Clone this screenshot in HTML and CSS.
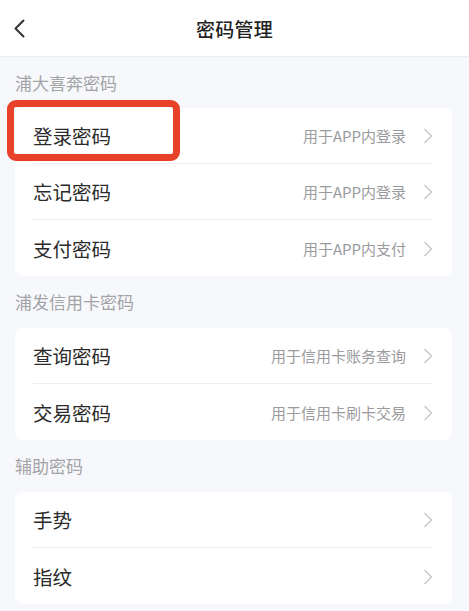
FILE: index.html
```html
<!DOCTYPE html>
<html lang="zh-CN">
<head>
<meta charset="utf-8">
<title>密码管理</title>
<link rel="stylesheet" href="styles.css">
</head>
<body>
  <header class="nav">
    <button class="nav-back" aria-label="返回">
      <svg width="12" height="19" viewBox="0 0 12 19"><path d="M10.5 1.5 L2.5 9.5 L10.5 17.5" fill="none" stroke="#333" stroke-width="2" stroke-linecap="round" stroke-linejoin="round"/></svg>
    </button>
    <h1 class="nav-title">密码管理</h1>
  </header>

  <main class="content">
    <section class="group">
      <h2 class="group-title">浦大喜奔密码</h2>
      <ul class="card">
        <li class="row">
          <span class="row-label">登录密码</span>
          <span class="row-hint">用于APP内登录</span>
          <svg class="chev" width="10" height="16" viewBox="0 0 10 16"><path d="M1.5 1 L8.5 8 L1.5 15" fill="none" stroke="#c6c6c8" stroke-width="1.4"/></svg>
          <span class="mark"></span>
        </li>
        <li class="row">
          <span class="row-label">忘记密码</span>
          <span class="row-hint">用于APP内登录</span>
          <svg class="chev" width="10" height="16" viewBox="0 0 10 16"><path d="M1.5 1 L8.5 8 L1.5 15" fill="none" stroke="#c6c6c8" stroke-width="1.4"/></svg>
        </li>
        <li class="row">
          <span class="row-label">支付密码</span>
          <span class="row-hint">用于APP内支付</span>
          <svg class="chev" width="10" height="16" viewBox="0 0 10 16"><path d="M1.5 1 L8.5 8 L1.5 15" fill="none" stroke="#c6c6c8" stroke-width="1.4"/></svg>
        </li>
      </ul>
    </section>

    <section class="group">
      <h2 class="group-title">浦发信用卡密码</h2>
      <ul class="card">
        <li class="row">
          <span class="row-label">查询密码</span>
          <span class="row-hint">用于信用卡账务查询</span>
          <svg class="chev" width="10" height="16" viewBox="0 0 10 16"><path d="M1.5 1 L8.5 8 L1.5 15" fill="none" stroke="#c6c6c8" stroke-width="1.4"/></svg>
        </li>
        <li class="row">
          <span class="row-label">交易密码</span>
          <span class="row-hint">用于信用卡刷卡交易</span>
          <svg class="chev" width="10" height="16" viewBox="0 0 10 16"><path d="M1.5 1 L8.5 8 L1.5 15" fill="none" stroke="#c6c6c8" stroke-width="1.4"/></svg>
        </li>
      </ul>
    </section>

    <section class="group">
      <h2 class="group-title">辅助密码</h2>
      <ul class="card">
        <li class="row">
          <span class="row-label">手势</span>
          <span class="row-hint"></span>
          <svg class="chev" width="10" height="16" viewBox="0 0 10 16"><path d="M1.5 1 L8.5 8 L1.5 15" fill="none" stroke="#c6c6c8" stroke-width="1.4"/></svg>
        </li>
        <li class="row">
          <span class="row-label">指纹</span>
          <span class="row-hint"></span>
          <svg class="chev" width="10" height="16" viewBox="0 0 10 16"><path d="M1.5 1 L8.5 8 L1.5 15" fill="none" stroke="#c6c6c8" stroke-width="1.4"/></svg>
        </li>
      </ul>
    </section>
  </main>
</body>
</html>
```

FILE: styles.css
```css
* {
  box-sizing: border-box;
}

html, body {
  margin: 0;
  padding: 0;
}

body {
  background: #f7f8fc;
  font-family: "Noto Sans CJK SC", "Noto Sans", sans-serif;
  color: #333;
  width: 469px;
  overflow: hidden;
}

/* top navigation bar */
.nav {
  position: relative;
  height: 57px;
  background: #fff;
  border-bottom: 1px solid #ededf0;
  display: flex;
  align-items: center;
  justify-content: center;
}

.nav-back {
  position: absolute;
  left: 13px;
  top: 19px;
  padding: 0;
  border: 0;
  background: none;
  display: flex;
}

.nav-title {
  margin: 0;
  font-size: 19px;
  font-weight: 500;
  color: #222;
  letter-spacing: 0.3px;
}

/* grouped lists */
.group-title {
  margin: 0;
  height: 52px;
  padding: 0 0 1px 15px;
  display: flex;
  align-items: center;
  font-size: 17px;
  font-weight: 400;
  color: #a3a3a6;
}

.group:first-child .group-title {
  height: 51px;
}

.card {
  list-style: none;
  margin: 0 17px 0 15px;
  padding: 0 19px 0 18px;
  background: #fff;
  border-radius: 8px;
}

.row {
  position: relative;
  height: 56px;
  display: flex;
  align-items: center;
  border-bottom: 1px solid #efeff1;
}

.row:last-child {
  border-bottom: 0;
}

.row-label {
  font-size: 19.5px;
  color: #2b2b2b;
  flex: 1;
}

.row-hint {
  font-size: 15px;
  color: #9b9b9e;
  margin-right: 17px;
}

.chev {
  flex: none;
  margin-top: 1px;
}

/* red outline drawn over the first entry */
.mark {
  position: absolute;
  left: -26px;
  top: -8px;
  width: 173px;
  height: 61px;
  border: 7.5px solid #e8412a;
  border-radius: 9px;
  pointer-events: none;
}
```
